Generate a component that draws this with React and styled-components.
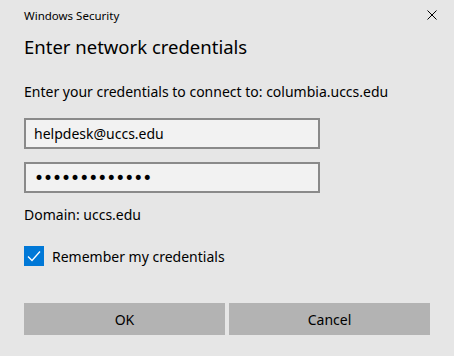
import React, { useState } from "react";
import styled, { createGlobalStyle } from "styled-components";

const GlobalStyle = createGlobalStyle`
  html, body {
    margin: 0;
    padding: 0;
    background: #e6e6e6;
  }
  * {
    box-sizing: border-box;
  }
`;

const Dialog = styled.div`
  width: 454px;
  height: 356px;
  background: #e6e6e6;
  font-family: "Segoe UI", "Noto Sans", sans-serif;
  color: #000;
  padding: 0 24px;
  display: flex;
  flex-direction: column;
`;

const TitleBar = styled.div`
  height: 30px;
  display: flex;
  align-items: center;
  justify-content: space-between;
  font-size: 11.5px;
  color: #000;
`;

const CloseButton = styled.button`
  border: none;
  background: transparent;
  padding: 0;
  margin-right: -7px;
  width: 10px;
  height: 10px;
  display: flex;
`;

const Heading = styled.h1`
  margin: 4px 0 0;
  font-size: 18.5px;
  font-weight: 400;
  line-height: 26px;
`;

const Message = styled.p`
  margin: 22px 0 0;
  font-size: 14px;
  line-height: 20px;
`;

const Field = styled.input`
  width: 296px;
  height: 31px;
  margin-top: ${(p) => p.$gap}px;
  border: 2px solid #8a8a8a;
  background: #f2f2f2;
  padding: 0 8px;
  font-family: inherit;
  font-size: 14px;
  color: #000;
  outline: none;

  &[type="password"] {
    font-family: "DejaVu Sans", sans-serif;
    font-size: 17px;
    letter-spacing: -1px;
  }
`;

const Domain = styled.div`
  margin-top: 12px;
  font-size: 14px;
  line-height: 20px;
`;

const CheckRow = styled.label`
  margin-top: 21px;
  display: flex;
  align-items: center;
  gap: 8px;
  font-size: 14px;
`;

const Box = styled.span`
  width: 20px;
  height: 20px;
  background: #0078d7;
  display: flex;
  align-items: center;
  justify-content: center;
`;

const Buttons = styled.div`
  margin-top: 37px;
  display: grid;
  grid-template-columns: 201px 201px;
  gap: 4px;
`;

const Button = styled.button`
  height: 32px;
  border: none;
  background: #b3b3b3;
  font-family: inherit;
  font-size: 14px;
  color: #000;
`;

function App() {
  const [user, setUser] = useState("helpdesk@uccs.edu");
  const [pass, setPass] = useState("helpdesk12345");
  const [remember, setRemember] = useState(true);

  return (
    <>
      <GlobalStyle />
      <Dialog>
        <TitleBar>
          <span>Windows Security</span>
          <CloseButton aria-label="Close">
            <svg width="10" height="10" viewBox="0 0 10 10">
              <path d="M0.5 0.5 L9.5 9.5 M9.5 0.5 L0.5 9.5" stroke="#000" strokeWidth="1" />
            </svg>
          </CloseButton>
        </TitleBar>
        <Heading>Enter network credentials</Heading>
        <Message>Enter your credentials to connect to: columbia.uccs.edu</Message>
        <Field $gap={16} value={user} onChange={(e) => setUser(e.target.value)} />
        <Field $gap={13} type="password" value={pass} onChange={(e) => setPass(e.target.value)} />
        <Domain>Domain: uccs.edu</Domain>
        <CheckRow onClick={() => setRemember(!remember)}>
          <Box>
            {remember && (
              <svg width="14" height="12" viewBox="0 0 14 12">
                <path d="M1 6.5 L5 10.5 L13 1.5" fill="none" stroke="#fff" strokeWidth="1.3" />
              </svg>
            )}
          </Box>
          Remember my credentials
        </CheckRow>
        <Buttons>
          <Button>OK</Button>
          <Button>Cancel</Button>
        </Buttons>
      </Dialog>
    </>
  );
}

export default App;
